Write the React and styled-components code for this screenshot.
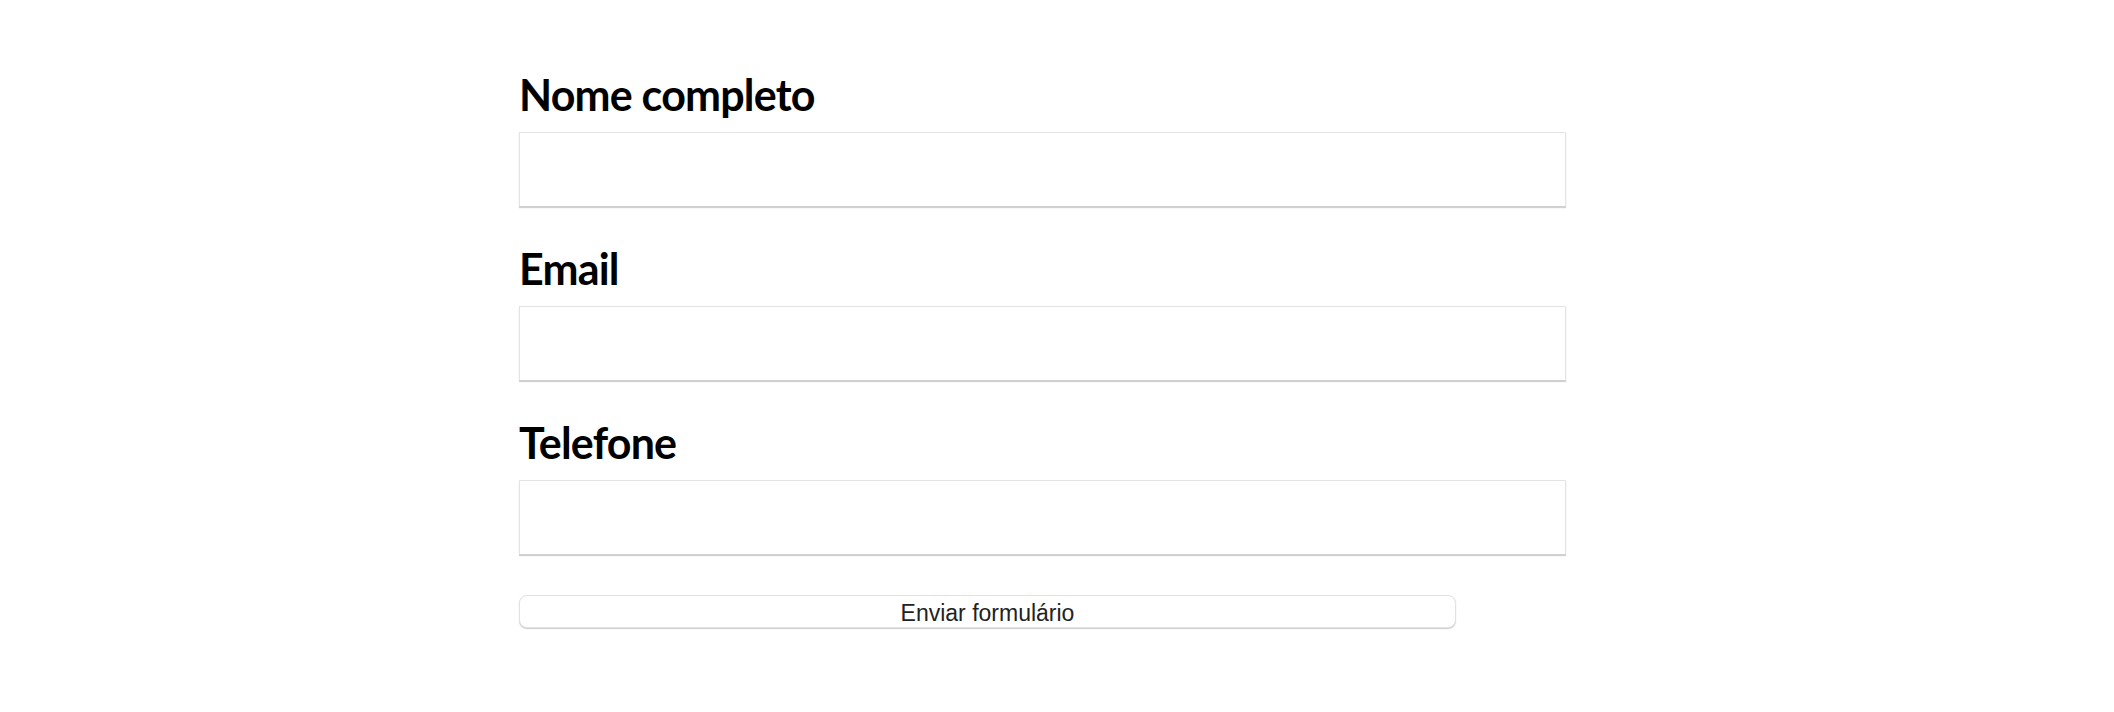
import React from "react";
import styled, { createGlobalStyle } from "styled-components";

const GlobalStyle = createGlobalStyle`
  html, body {
    margin: 0;
    padding: 0;
    background: #ffffff;
  }
  body {
    font-family: "Liberation Sans", Arial, sans-serif;
  }
`;

const Page = styled.div`
  padding: 64px 0 40px 519px;
`;

const Form = styled.form`
  width: 1047px;
  display: flex;
  flex-direction: column;
`;

const Field = styled.div`
  display: flex;
  flex-direction: column;
  margin-bottom: 31px;
`;

const Label = styled.label`
  font-family: Lato, "Open Sans", sans-serif;
  font-weight: 700;
  font-size: 43px;
  letter-spacing: -0.8px;
  line-height: 56px;
  padding-top: 3px;
  color: #000;
  margin-bottom: 9px;
`;

const Input = styled.input`
  box-sizing: border-box;
  width: 100%;
  height: 75px;
  border: 1px solid #e4e4e4;
  border-bottom-color: #d0d0d0;
  box-shadow: 0 1px 1px rgba(0, 0, 0, 0.18);
  background: #fff;
  outline: none;
  font-size: 22px;
  padding: 0 12px;
`;

const Submit = styled.button`
  box-sizing: border-box;
  margin-top: 9px;
  width: 937px;
  height: 33px;
  border: 1px solid #e2e2e2;
  border-radius: 8px;
  background: #fff;
  box-shadow: 0 1px 1px rgba(0, 0, 0, 0.2);
  font-family: "Liberation Sans", Arial, sans-serif;
  font-size: 23px;
  line-height: 1;
  color: #222;
  padding: 4px 0 0;
  cursor: pointer;
`;

const fields = [
  { id: "nome", label: "Nome completo", type: "text" },
  { id: "email", label: "Email", type: "email" },
  { id: "telefone", label: "Telefone", type: "tel" },
];

export default function App() {
  return (
    <>
      <GlobalStyle />
      <Page>
        <Form onSubmit={(e) => e.preventDefault()}>
          {fields.map((f) => (
            <Field key={f.id}>
              <Label htmlFor={f.id}>{f.label}</Label>
              <Input id={f.id} type={f.type} />
            </Field>
          ))}
          <Submit type="submit">Enviar formulário</Submit>
        </Form>
      </Page>
    </>
  );
}
